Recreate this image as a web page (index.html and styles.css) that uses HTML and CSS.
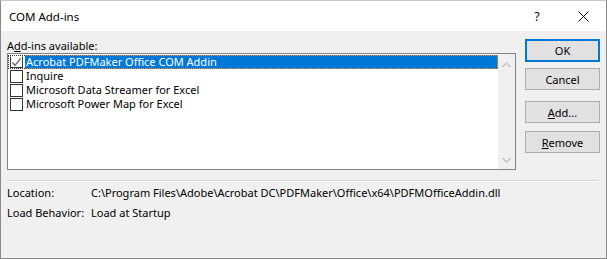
FILE: index.html
```html
<!DOCTYPE html>
<html>
	<head>
		<meta charset="utf-8">
		<title>COM Add-ins</title>
		<link rel="stylesheet" href="styles.css">
	</head>
	<body>
		<div class="dialog">
			<div class="titlebar">
				<span class="title">COM Add-ins</span>
				<span class="help">?</span>
				<span class="close">
					<svg width="11" height="11" viewBox="0 0 11 11"><path d="M0.5 0.5L10.5 10.5M10.5 0.5L0.5 10.5" stroke="#000" stroke-width="1" fill="none"/></svg>
				</span>
			</div>
			<div class="content">
				<div class="main">
					<div class="left">
						<div class="label">A<u>d</u>d-ins available:</div>
						<div class="listbox">
							<ul class="items">
								<li class="item focus">
									<span class="check-cell"><span class="box checked">
										<svg width="11" height="11" viewBox="0 0 11 11"><path d="M1.5 5.5L4 8.5L9.5 1.5" stroke="#6d6d6d" stroke-width="1.3" fill="none"/></svg>
									</span></span>
									<span class="name">Acrobat PDFMaker Office COM Addin</span>
								</li>
								<li class="item">
									<span class="check-cell"><span class="box"></span></span>
									<span class="name">Inquire</span>
								</li>
								<li class="item">
									<span class="check-cell"><span class="box"></span></span>
									<span class="name">Microsoft Data Streamer for Excel</span>
								</li>
								<li class="item">
									<span class="check-cell"><span class="box"></span></span>
									<span class="name">Microsoft Power Map for Excel</span>
								</li>
							</ul>
							<div class="scrollbar">
								<svg width="9" height="6" viewBox="0 0 9 6"><path d="M0.5 5L4.5 1L8.5 5" stroke="#c2c2c2" stroke-width="1.4" fill="none"/></svg>
								<svg width="9" height="6" viewBox="0 0 9 6"><path d="M0.5 1L4.5 5L8.5 1" stroke="#c2c2c2" stroke-width="1.4" fill="none"/></svg>
							</div>
						</div>
					</div>
					<div class="buttons">
						<button class="btn default">OK</button>
						<button class="btn cancel">Cancel</button>
						<button class="btn add"><u>A</u>dd...</button>
						<button class="btn remove"><u>R</u>emove</button>
					</div>
				</div>
				<div class="separator"></div>
				<div class="info">
					<span class="key">Location:</span>
					<span class="value">C:\Program Files\Adobe\Acrobat DC\PDFMaker\Office\x64\PDFMOfficeAddin.dll</span>
					<span class="key">Load Behavior:</span>
					<span class="value">Load at Startup</span>
				</div>
			</div>
		</div>
	</body>
</html>
```

FILE: styles.css
```css
* {
	margin: 0;
	padding: 0;
	box-sizing: border-box;
}

ul {
	list-style: none;
}

body {
	font-family: "Noto Sans", "DejaVu Sans", sans-serif;
	font-size: 11px;
	color: #000;
	background: #fff;
}

.dialog {
	width: 607px;
	height: 259px;
	border: 1px solid #8a8a8a;
	border-top-color: #c8c8c8;
	background: #f0f0f0;
	display: flex;
	flex-direction: column;
}

.titlebar {
	height: 30px;
	background: #fff;
	display: flex;
	align-items: center;
	padding-left: 8px;
}

.titlebar .title {
	flex: 1;
	font-size: 11.5px;
}

.titlebar .help {
	width: 46px;
	text-align: center;
	font-size: 12px;
}

.titlebar .close {
	width: 46px;
	height: 30px;
	display: flex;
	align-items: center;
	justify-content: center;
}

.content {
	flex: 1;
	padding: 7px 6px 0 6px;
}

.main {
	display: flex;
	gap: 9px;
}

.left {
	width: 509px;
}

.label {
	line-height: 15px;
}

.listbox {
	height: 117px;
	border: 1px solid #828282;
	background: #fff;
	display: flex;
}

.items {
	flex: 1;
	padding-top: 1px;
}

.item {
	height: 14px;
	display: flex;
	align-items: center;
	line-height: 14px;
}

.check-cell {
	width: 17px;
	height: 14px;
	display: flex;
	align-items: center;
	padding-left: 2px;
}

.box {
	width: 13px;
	height: 13px;
	border: 1px solid #333;
	background: #fff;
	display: flex;
	align-items: center;
	justify-content: center;
}

.name {
	flex: 1;
	height: 14px;
	padding-left: 1px;
	white-space: nowrap;
}

.item.focus .check-cell {
	border: 1px dotted #333;
	border-right: none;
	padding-left: 1px;
}

.item.focus .check-cell .box {
	height: 12px;
	border-top-color: transparent;
}

.item.focus .name {
	background: #0078d7;
	color: #fff;
	border: 1px dotted #ff8c28;
	border-left: none;
	line-height: 12px;
}

.scrollbar {
	width: 17px;
	background: #f0f0f0;
	display: flex;
	flex-direction: column;
	align-items: center;
	justify-content: space-between;
	padding: 8px 0 6px;
}

.buttons {
	width: 75px;
	display: flex;
	flex-direction: column;
	padding-top: 1px;
}

.btn {
	height: 22px;
	border: 1px solid #adadad;
	background: #e1e1e1;
	font-family: inherit;
	font-size: 11px;
	color: #000;
}

.btn.default {
	height: 23px;
	border: 2px solid #0078d7;
}

.btn.cancel {
	margin-top: 6px;
}

.btn.add {
	margin-top: 11px;
}

.btn.remove {
	margin-top: 8px;
}

.separator {
	margin-top: 10px;
	height: 2px;
	border-top: 1px solid #d5d5d5;
	border-bottom: 1px solid #fff;
	width: 592px;
}

.info {
	display: grid;
	grid-template-columns: 84px auto;
	grid-auto-rows: 20px;
	align-items: center;
	white-space: nowrap;
}
```
